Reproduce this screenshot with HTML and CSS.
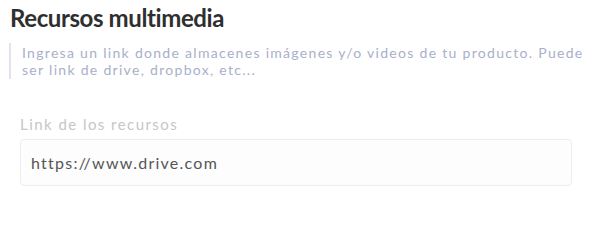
FILE: index.html
```html
<!DOCTYPE html>
<html lang="es">
<head>
<meta charset="utf-8">
<link rel="stylesheet" href="styles.css">
</head>
<body>
<section class="media">
  <h2 class="media-title">Recursos multimedia</h2>
  <p class="media-hint">Ingresa un link donde almacenes imágenes y/o videos de tu producto. Puede ser link de drive, dropbox, etc...</p>
  <div class="field">
    <label class="field-label" for="link">Link de los recursos</label>
    <input class="field-input" id="link" type="text" value="https://www.drive.com">
  </div>
</section>
</body>
</html>
```
FILE: styles.css
```css
html, body {
  margin: 0;
  padding: 0;
  background: #ffffff;
}
.media {
  font-family: "Lato", "Noto Sans", sans-serif;
  padding: 3px 0 0 9px;
  width: 582px;
}
.media-title {
  margin: 0 0 0 1px;
  font-size: 24px;
  line-height: 30px;
  font-weight: 700;
  letter-spacing: -0.4px;
  color: #2f2f2f;
}
.media-hint {
  margin: 10px 0 0 0;
  padding: 1px 0 1px 11px;
  border-left: 2px solid #dfe4ef;
  font-size: 14px;
  line-height: 17px;
  letter-spacing: 1.3px;
  color: #a8b0cb;
}
.field {
  display: flex;
  flex-direction: column;
  padding: 0 0 0 11px;
  margin-top: 36px;
}
.field-label {
  font-size: 15px;
  line-height: 18px;
  letter-spacing: 1.45px;
  color: #c6c6c6;
  margin-bottom: 6px;
}
.field-input {
  box-sizing: border-box;
  width: 552px;
  height: 47px;
  border: 1.5px solid #ececec;
  border-radius: 4px;
  background: #fdfdfd;
  padding: 0 10px;
  font-family: "Lato", "Noto Sans", sans-serif;
  font-size: 16px;
  letter-spacing: 1.25px;
  color: #555555;
  outline: none;
}
```
